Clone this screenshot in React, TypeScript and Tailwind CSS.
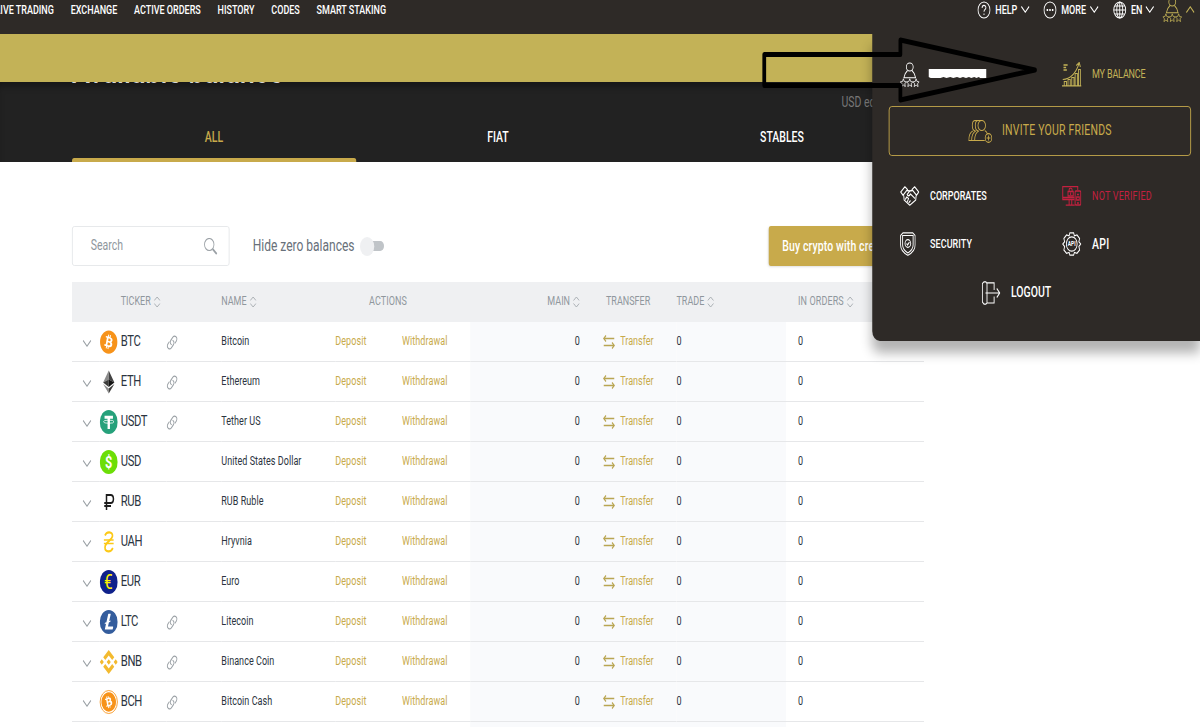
import React from 'react';
import { FaBitcoin } from 'react-icons/fa';
import { SiBinance, SiLitecoin } from 'react-icons/si';

interface Asset {
  ticker: string;
  name: string;
  link?: boolean;
}

const assets: Asset[] = [
  { ticker: 'BTC', name: 'Bitcoin', link: true },
  { ticker: 'ETH', name: 'Ethereum', link: true },
  { ticker: 'USDT', name: 'Tether US', link: true },
  { ticker: 'USD', name: 'United States Dollar' },
  { ticker: 'RUB', name: 'RUB Ruble' },
  { ticker: 'UAH', name: 'Hryvnia' },
  { ticker: 'EUR', name: 'Euro' },
  { ticker: 'LTC', name: 'Litecoin', link: true },
  { ticker: 'BNB', name: 'Binance Coin', link: true },
  { ticker: 'BCH', name: 'Bitcoin Cash', link: true },
];

const navItems = ['LIVE TRADING', 'EXCHANGE', 'ACTIVE ORDERS', 'HISTORY', 'CODES', 'SMART STAKING'];

const columns = 'grid grid-cols-[37px_28px_61px_73px_152px_89px_91px_177px_98px_146px_184px]';

const CoinIcon: React.FC<{ ticker: string }> = ({ ticker }) => {
  switch (ticker) {
    case 'BTC':
      return <FaBitcoin className="h-6 w-6 text-[#f7931a]" />;
    case 'ETH':
      return (
        <svg className="h-6 w-6" viewBox="0 0 24 24">
          <path d="M12 .5 4.500 12.500 12 9.500z" fill="#8a8a8a" />
          <path d="M12 .5v9l7.500 3z" fill="#444" />
          <path d="M4.500 12.500 12 9.500v7.500z" fill="#3c3c3b" />
          <path d="M12 9.500l7.500 3L12 17z" fill="#141414" />
          <path d="M4.500 14l7.500 4.500v5z" fill="#8c8c8c" />
          <path d="M19.500 14 12 18.500v5z" fill="#3c3c3b" />
        </svg>
      );
    case 'USDT':
      return (
        <svg className="h-6 w-6" viewBox="0 0 24 24">
          <circle cx="12" cy="12" r="12" fill="#26a17b" />
          <path d="M6.400 5.800h11.200v3h-4V19h-3.200V8.800h-4z" fill="#fff" />
          <ellipse cx="12" cy="11.700" rx="7" ry="1.600" fill="none" stroke="#fff" strokeWidth="0.900" />
        </svg>
      );
    case 'USD':
      return (
        <svg className="h-6 w-6" viewBox="0 0 24 24">
          <circle cx="12" cy="12" r="12" fill="#6cde07" />
          <text x="12" y="18" textAnchor="middle" fontSize="17" fontWeight="700" fill="#fff">$</text>
        </svg>
      );
    case 'RUB':
      return (
        <svg className="h-6 w-6" viewBox="0 0 24 24" fill="none" stroke="#1c1c1c" strokeWidth="2">
          <path d="M9 20V5h5.500c5 0 5 8 0 8H6M6 16h9" />
        </svg>
      );
    case 'UAH':
      return (
        <svg className="h-6 w-6" viewBox="0 0 24 24" fill="none" stroke="#fcc917" strokeWidth="2.200">
          <path d="M7 5.500C9 1 17.500 1.500 17 6c-.5 4.500-10 6-10 11.500 0 5 8 5 10.500.5" />
          <path d="M5.500 10h13M5.500 13.500h13" strokeWidth="1.500" />
        </svg>
      );
    case 'EUR':
      return (
        <svg className="h-6 w-6" viewBox="0 0 24 24">
          <circle cx="12" cy="12" r="12" fill="#0f218b" />
          <text x="11.500" y="19" textAnchor="middle" fontSize="20.500" fill="#fff200">€</text>
        </svg>
      );
    case 'LTC':
      return <SiLitecoin className="h-6 w-6 text-[#345d9d]" />;
    case 'BNB':
      return <SiBinance className="h-6 w-6 text-[#f3ba2f]" />;
    default:
      return (
        <span className="flex h-6 w-6 items-center justify-center rounded-full border border-[#f7931a]">
          <FaBitcoin className="h-5 w-5 rotate-[-28deg] text-[#f7931a]" />
        </span>
      );
  }
};

const Chevron: React.FC<{ className?: string }> = ({ className = '' }) => (
  <svg className={`h-[7px] w-3 ${className}`} viewBox="0 0 12 7" fill="none" stroke="currentColor" strokeWidth="1.200">
    <path d="m.8.5 5.200 5.700 5.200-5.700" />
  </svg>
);

const SortIcon = () => (
  <svg className="mt-px ml-1 h-3 w-[9px]" viewBox="0 0 9 12" fill="none" stroke="#a3a9ae" strokeWidth="1">
    <path d="M.7 4.500 4.500 1l3.800 3.500M.7 7.500 4.500 11l3.800-3.500" />
  </svg>
);

const LinkIcon = () => (
  <svg className="h-[15px] w-[15px]" viewBox="0 0 15 15" fill="none" stroke="#9aa0a5" strokeWidth="1.200" strokeLinecap="round">
    <path d="M6.500 9.500C4.500 8.500 4.700 6.500 6 5l2.500-2.800c2.500-2.700 7 .3 4.700 3.600L11.500 8" />
    <path d="M8.500 5.500c2 1 1.800 3 .5 4.500l-2.500 2.800c-2.500 2.700-7-.3-4.700-3.600L3.500 7" />
  </svg>
);

const TransferIcon = () => (
  <svg className="h-[14px] w-4" viewBox="0 0 16 14" fill="none" stroke="#b9a552" strokeWidth="1.500">
    <path d="M15 3.500H1M4 .5l-3 3 3 3M1 10.500h14M12 7.500l3 3-3 3" />
  </svg>
);

const star = 'l1.200 2.700 2.900.3-2.200 2 .7 2.800-2.600-1.500-2.600 1.500.7-2.800-2.200-2 2.900-.3z';

const UserIcon = () => (
  <svg className="h-[25px] w-[26px] shrink-0" viewBox="0 0 26 25" fill="none" stroke="currentColor" strokeWidth="1.100">
    <ellipse cx="13" cy="5" rx="4.600" ry="4" />
    <path d="M10 8.500 7 11.500l-1.800 4.300h15.600L19 11.500l-3-3" />
    <g strokeWidth="0.900">
      <path d={`M4.500 16.800${star}`} />
      <path d={`M13 16.800${star}`} />
      <path d={`M21.500 16.800${star}`} />
    </g>
  </svg>
);

const BalanceIcon = () => (
  <svg className="h-[25px] w-[26px]" viewBox="0 0 26 25" fill="none" stroke="currentColor" strokeWidth="1.200">
    <path d="M0 23.800h26M3 23.500v-4h3v4M8 23.500v-6h3v6M13 23.500v-8h3v8M17.500 23.500v-12h3v12M22 23.500V7.500h2.500v16" />
    <path d="M1 17.500C10 17 18 12 22.500 2M19 3.500l4-3 1.500 4.500" />
    <path d="M2 3h5.500M2 5.500h3.500M2 8h4.500" strokeWidth="1.500" />
  </svg>
);

const FriendsIcon = () => (
  <svg className="h-[23px] w-8" viewBox="0 0 32 23" fill="none" stroke="currentColor" strokeWidth="1.100">
    <circle cx="18" cy="5.500" r="5" />
    <path d="M13.500.5C8 .5 8 10 13.500 11M9.500.5C4 .5 4 10 9.500 11M9.500.5h9" />
    <path d="M22 20.500H.7c0-5 1.300-8 5.300-9.500M4.500 20.500c0-5 1.500-8 5.500-9.500M8.500 20.500c0-5 1.500-8 5.500-9.500M22 10.500c2 .8 3 2 3.800 3.500" />
    <circle cx="27" cy="18" r="4.400" />
    <path d="M27 15.500v5M24.500 18h5" />
  </svg>
);

const HandshakeIcon = () => (
  <svg className="h-5 w-[26px]" viewBox="0 0 26 20" fill="none" stroke="currentColor" strokeWidth="1.300" strokeLinejoin="round">
    <path d="M6.500.8 1 6l3 3.200L10 3.500zM19.500.8 25 6l-3 3.200L16 3.500zM9.500 4.500l3 .5 4-.5M21.500 9.500l-.5 4.500-8 5.200L5.500 14l-.5-4.500" />
    <path d="M13 5 9.500 8.500c1 2 3 1.500 4.500-.5l6 4.500M7 13.500 9 11l2.500 1.500L9.500 16M11.500 17l2.500-2.500" />
  </svg>
);

const VerifyIcon = () => (
  <svg className="h-5 w-[26px]" viewBox="0 0 26 20" fill="none" stroke="currentColor" strokeWidth="1.300">
    <path d="M16.500 13.500H1V.7h20V4M1 11.500h15.500M9.500 14v4.500M13 14v4.500M5 19.200h12" />
    <rect x="17.500" y="5" width="7.500" height="14" rx="1" />
    <path d="M8 5.500h7v4.500H8zM9.500 5.500V4c0-2.500 4-2.500 4 0v1.500M11.500 6.500v2.500M19.500 11H23v3h-3.500zM20 8.500h2.500M20 17h2.500" />
  </svg>
);

const ShieldIcon = () => (
  <svg className="h-6 w-[21px]" viewBox="0 0 21 24" fill="none" stroke="currentColor" strokeWidth="1.200">
    <path d="M.8 3.500 4 .8h13l3.200 2.700V13c0 4.500-4 8-9.700 10.300C4.800 21 .8 17.500.8 13z" />
    <path d="M3.500 3.500h14V13c0 3.500-3 6-7 8-4-2-7-4.500-7-8z" />
    <circle cx="10.500" cy="11.500" r="3.800" />
    <path d="m8.800 11.500 1.300 1.500 2.500-3" />
  </svg>
);

const ApiIcon = () => (
  <svg className="h-6 w-[26px]" viewBox="0 0 26 24" fill="none" stroke="currentColor" strokeWidth="1.200">
    <path d="M10.500.8h5l1 3 3.500-.8 3.500 3.500-1 3.300L25 12l-2.500 2.500 1 3.500-3.500 3.300-3.500-.8-1 2.700h-5l-1-2.700-3.500.8L2.500 18l1-3.500L1 12l2.500-2.200-1-3.300L6 3l3.500.8z" />
    <circle cx="13" cy="12" r="7.200" />
    <text x="13" y="14.300" textAnchor="middle" fontSize="6.500" fontWeight="700" fill="currentColor" stroke="none">API</text>
  </svg>
);

const LogoutIcon = () => (
  <svg className="h-6 w-[25px]" viewBox="0 0 25 24" fill="none" stroke="currentColor" strokeWidth="1.200">
    <path d="M3 .8h2.500L7 2.500V22l-1.500 1.200H3L.8 21V2.500zM7 1.800h9.500V9M7 22h9.500v-6.500" />
    <path d="M5 12h19M20 7.500l4 4.500-4 4.500" />
  </svg>
);

const Header = () => (
  <header className="flex h-[34px] justify-between bg-[#2e2a27] text-xs font-medium text-white">
    <nav className="-ml-[6px] flex h-[19px] items-center gap-[22.4px] whitespace-nowrap">
      {navItems.map((item) => (
        <a key={item}>{item}</a>
      ))}
    </nav>
    <div className="mr-[7px] flex h-[19px] items-center">
      <svg className="mr-1.5 h-[18px] w-[18px]" viewBox="0 0 18 18" fill="none" stroke="currentColor" strokeWidth="1.200">
        <circle cx="9" cy="9" r="8" />
        <path d="M6.500 7c0-3.500 5-3.300 5-.3 0 2-2.500 1.800-2.500 4M9 12.500V14" />
      </svg>
      <span className="w-[34px]">HELP</span>
      <Chevron className="mr-[18px]" />
      <svg className="mr-1.5 h-[18px] w-[18px]" viewBox="0 0 18 18" fill="none" stroke="currentColor" strokeWidth="1.200">
        <circle cx="9" cy="9" r="8" />
        <path d="M4.500 9h2M8 9h2M11.500 9h2" strokeWidth="1.800" />
      </svg>
      <span className="w-[38px]">MORE</span>
      <Chevron className="mr-[19px]" />
      <svg className="mr-1.5 h-[18px] w-[18px]" viewBox="0 0 18 18" fill="none" stroke="currentColor" strokeWidth="1.200">
        <circle cx="9" cy="9" r="8" />
        <ellipse cx="9" cy="9" rx="4" ry="8" />
        <path d="M9 1v16M1 9h16M2.500 5h13M2.500 13h13" />
      </svg>
      <span className="w-[19px]">EN</span>
      <Chevron className="mr-[11px]" />
      <span className="flex items-center text-[#c3b257]">
        <UserIcon />
        <Chevron className="ml-[5px] rotate-180" />
      </span>
    </div>
  </header>
);

const Hero = () => (
  <section className="h-20 overflow-hidden bg-[#222] px-24 shadow-[inset_0_8px_8px_-4px_rgba(0,0,0,0.35)]">
    <h1 className="-mt-[34px] h-[46px] text-4xl leading-[46px] font-medium text-[#d6d6d6]">Available balance</h1>
    <div className="flex h-4 items-center pl-[1026px] text-sm whitespace-nowrap text-[#777]">USD equivalent</div>
    <div className="grid h-[52px] w-[1136px] grid-cols-3 text-center text-sm font-medium text-white">
      <div className="flex flex-col justify-between text-[#c8aa4b]">
        <span className="pt-[17px]">ALL</span>
        <span className="h-1 rounded-t-[3px] bg-[#c8aa4b]" />
      </div>
      <span className="pt-[17px]">FIAT</span>
      <span className="pt-[17px]">STABLES</span>
    </div>
  </section>
);

const Toolbar = () => (
  <div className="mt-16 flex h-10 items-center">
    <div className="flex h-10 w-[210px] items-center justify-between rounded-[3px] border border-[#e4e6e8] pr-[15px] pl-6 text-sm text-[#8f979d]">
      <span className="pb-0.5">Search</span>
      <svg className="h-[17px] w-[18px]" viewBox="0 0 18 17" fill="none" stroke="#9aa0a5" strokeWidth="1.100">
        <ellipse cx="7" cy="6.500" rx="6.300" ry="6" />
        <path d="m11.500 11 5.500 5" strokeWidth="2.200" />
      </svg>
    </div>
    <span className="ml-[31px] pb-px text-base text-[#68707a]">Hide zero balances</span>
    <span className="ml-[7px] flex h-[19px] w-8 items-center">
      <span className="z-1 h-[19px] w-[19px] rounded-full bg-[#eff0f2]" />
      <span className="-ml-[8px] h-[10px] w-[21px] rounded-full bg-[#c0c4c8]" />
    </span>
    <button className="ml-auto h-10 w-[207px] rounded-[3px] bg-[#c8aa4b] pb-px text-sm font-medium tracking-[0.15px] whitespace-nowrap text-white shadow-sm">
      Buy crypto with credit card
    </button>
  </div>
);

const AssetRow: React.FC<{ asset: Asset }> = ({ asset }) => (
  <div className={`${columns} h-10 items-center text-xs text-[#2b3440]`}>
    <span className="flex h-10 items-center border-b border-[#e6e7e9] pt-1 pl-[14px] text-[#9aa0a5]">
      <Chevron />
    </span>
    <span className="flex h-10 items-center border-b border-[#e6e7e9] pt-px">
      <CoinIcon ticker={asset.ticker} />
    </span>
    <span className="flex h-10 items-center border-b border-[#e6e7e9] text-[15px] tracking-[-0.5px]">{asset.ticker}</span>
    <span className="flex h-10 items-center border-b border-[#e6e7e9] pt-px">{asset.link && <LinkIcon />}</span>
    <span className="flex h-10 items-center border-b border-[#e6e7e9] pb-px tracking-[0.07px]">{asset.name}</span>
    <a className="flex h-10 items-center border-b border-[#e6e7e9] pb-px tracking-[0.1px] text-[#c8aa4b]">Deposit</a>
    <a className="flex h-10 items-center border-b border-[#e6e7e9] pb-px tracking-[0.1px] text-[#c8aa4b]">Withdrawal</a>
    <span className="flex h-10 items-center justify-end border-b border-[#e6e7e9] bg-[#f9fafc] pr-[31px] pb-px">0</span>
    <a className="flex h-10 items-center gap-[7px] border-b border-[#e6e7e9] bg-[#f9fafc] text-[#c8aa4b]">
      <TransferIcon />
      <span className="pb-px">Transfer</span>
    </a>
    <span className="flex h-10 items-center border-b border-[#e6e7e9] bg-[#f9fafc] pb-px">0</span>
    <span className="flex h-10 items-center border-b border-[#e6e7e9] pb-px pl-4">0</span>
  </div>
);

const BalanceTable = () => (
  <div className="mt-4">
    <div className={`${columns} h-10 items-center bg-[#eff0f2] pb-0.5 text-xs text-[#8f979d]`}>
      <span className="col-start-3 flex items-center">TICKER<SortIcon /></span>
      <span className="col-start-5 flex items-center">NAME<SortIcon /></span>
      <span className="col-span-2 pl-[45px] tracking-[0.1px]">ACTIONS</span>
      <span className="flex items-center justify-end pr-[31px]">MAIN<SortIcon /></span>
      <span className="pl-1">TRANSFER</span>
      <span className="flex items-center">TRADE<SortIcon /></span>
      <span className="flex items-center pl-4 tracking-[0.15px]">IN ORDERS<SortIcon /></span>
    </div>
    {assets.map((asset) => (
      <AssetRow key={asset.ticker} asset={asset} />
    ))}
    <div className={columns}>
      <span className="col-span-3 col-start-8 h-[5px] bg-[#f9fafc]" />
    </div>
  </div>
);

const AccountMenu = () => (
  <aside className="absolute top-[34px] right-0 h-[307px] w-[437px] rounded-bl-[10px] bg-[#2e2a27] text-xs font-medium text-white shadow-[0_12px_14px_rgba(0,0,0,0.3)] [clip-path:inset(0_0_-40px_-30px)]">
    <div className="mt-[27px] ml-[37px] flex h-[26px] items-center">
      <UserIcon />
      <svg className="ml-[12px] h-[10px] w-[78px]" viewBox="0 0 78 10">
        <path d="M0 0h77v9h-8l-2-1-3 1-3-1-4 1-3-1-4 1-4-1-4 1-4-1-5 1-4-1-5 1-4-1-4 1H3L0 8z" fill="#fff" />
      </svg>
      <a className="ml-[100px] flex items-center gap-[14px] font-normal text-[#c3b257]">
        <BalanceIcon />
        <span className="pb-px tracking-[-0.2px]">MY BALANCE</span>
      </a>
    </div>
    <a className="mt-[19px] ml-[22px] flex h-[50px] w-[403px] items-center gap-[13px] rounded border border-[#c8aa4b] pl-[105px] text-sm font-normal text-[#c8aa4b]">
      <FriendsIcon />
      <span className="pb-0.5 tracking-[0.3px]">INVITE YOUR FRIENDS</span>
    </a>
    <div className="mt-4 grid grid-cols-[216px_1fr] pl-[37px]">
      <a className="flex h-12 items-center gap-[14px]"><HandshakeIcon /><span className="pb-px">CORPORATES</span></a>
      <a className="flex h-12 items-center gap-[14px] font-normal text-[#c4203f]"><VerifyIcon /><span className="pb-px tracking-[0.3px]">NOT VERIFIED</span></a>
      <a className="flex h-12 items-center gap-[19px]"><ShieldIcon /><span className="pb-px tracking-[0.1px]">SECURITY</span></a>
      <a className="flex h-12 items-center gap-[14px] text-sm"><ApiIcon /><span className="pb-px tracking-[0.4px]">API</span></a>
    </div>
    <a className="ml-[146px] flex h-12 items-center gap-[14px] pt-px text-sm"><LogoutIcon /><span className="pb-0.5">LOGOUT</span></a>
  </aside>
);

const PointerArrow = () => (
  <svg className="absolute top-0 left-0 h-[120px] w-[1600px]" viewBox="0 0 1600 120" fill="none" stroke="#000" strokeWidth="5">
    <path d="M1019 54.500h181.500V40L1380 70l-179.500 30V85.500H1019z" strokeLinejoin="round" />
  </svg>
);

const App: React.FC = () => (
  <div className="h-[727px] w-[1200px] overflow-hidden bg-white">
    <div className="relative h-[727px] w-[1600px] origin-top-left scale-x-75 overflow-hidden font-['Roboto','Liberation_Sans',sans-serif]">
      <Header />
      <div className="h-12 bg-[#c3b257]" />
      <Hero />
      <main className="ml-24 w-[1136px]">
        <Toolbar />
        <BalanceTable />
      </main>
      <AccountMenu />
      <PointerArrow />
    </div>
  </div>
);

export default App;
